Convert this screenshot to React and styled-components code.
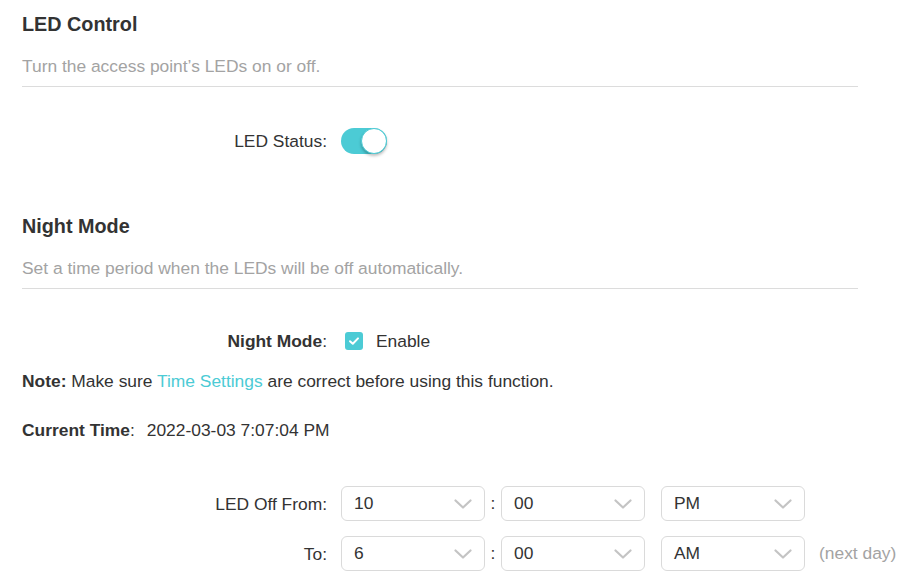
import React from "react";
import styled, { createGlobalStyle } from "styled-components";

const Global = createGlobalStyle`
  html, body { margin: 0; padding: 0; background: #fff; }
  body { font-family: "Liberation Sans", Arial, sans-serif; color: #333; }
`;

const Page = styled.div`
  width: 836px;
  padding: 12px 51px 0 22px;
  font-size: 17.4px;
`;

const SectionHead = styled.div`
  border-bottom: 1px solid #dcdcdc;
  padding-bottom: 8px;
  margin-top: ${(p) => p.$top || 0}px;
`;

const Title = styled.h2`
  margin: 0;
  font-size: 19.8px;
  line-height: 24px;
  font-weight: bold;
  color: #333;
`;

const Desc = styled.p`
  margin: 18px 0 0;
  line-height: 24px;
  color: #a3a3a3;
`;

const FormRow = styled.div`
  display: grid;
  grid-template-columns: 305px max-content;
  column-gap: 14px;
  align-items: center;
  margin-top: ${(p) => p.$top || 0}px;
  min-height: ${(p) => p.$h || 24}px;
`;

const Label = styled.div`
  text-align: right;
  line-height: 24px;
  b { font-weight: bold; }
`;

const Field = styled.div`
  display: flex;
  align-items: center;
  white-space: nowrap;
`;

const Toggle = styled.div`
  position: relative;
  width: 46px;
  height: 26px;
  border-radius: 13px;
  background: #4ccbd5;
`;

const Knob = styled.div`
  position: absolute;
  right: 0;
  top: 0;
  width: 24px;
  height: 24px;
  border-radius: 50%;
  background: #fff;
  border: 1px solid #4ccbd5;
  box-shadow: 0 2px 3px rgba(0, 0, 0, 0.25);
`;

const Check = styled.span`
  display: inline-flex;
  align-items: center;
  justify-content: center;
  width: 18px;
  height: 18px;
  border-radius: 3px;
  background: #4ccbd5;
  margin-left: 4px;
  margin-right: 13px;
`;

const Line = styled.div`
  line-height: 24px;
  margin-top: ${(p) => p.$top || 0}px;
  b { font-weight: bold; }
`;

const Link = styled.span`
  color: #4ccbd5;
`;

const Value = styled.span`
  margin-left: 12px;
`;

const Select = styled.div`
  box-sizing: border-box;
  flex: 0 0 144px;
  width: 144px;
  height: 35px;
  border: 1px solid #dadada;
  border-radius: 6px;
  padding: 0 12px 0 12px;
  display: flex;
  align-items: center;
  justify-content: space-between;
  color: #333;
`;

const Colon = styled.span`
  flex: 0 0 16px;
  text-align: center;
`;

const Gap = styled.span`
  flex: 0 0 16px;
`;

const Hint = styled.span`
  color: #a3a3a3;
  margin-left: 14px;
  white-space: nowrap;
`;

const Chevron = () => (
  <svg width="18" height="10" viewBox="0 0 18 10">
    <path d="M1.5 1.5 L9 8.5 L16.5 1.5" fill="none" stroke="#c4c4c4" strokeWidth="2.2" strokeLinecap="round" strokeLinejoin="round" />
  </svg>
);

const Sel = ({ value }) => (
  <Select>
    <span>{value}</span>
    <Chevron />
  </Select>
);

export default function App() {
  return (
    <>
      <Global />
      <Page>
        <SectionHead>
          <Title>LED Control</Title>
          <Desc>Turn the access point’s LEDs on or off.</Desc>
        </SectionHead>
        <FormRow $top={40} $h={27}>
          <Label>LED Status:</Label>
          <Field>
            <Toggle>
              <Knob />
            </Toggle>
          </Field>
        </FormRow>

        <SectionHead $top={60}>
          <Title>Night Mode</Title>
          <Desc>Set a time period when the LEDs will be off automatically.</Desc>
        </SectionHead>
        <FormRow $top={40}>
          <Label>
            <b>Night Mode</b>:
          </Label>
          <Field>
            <Check>
              <svg width="12" height="10" viewBox="0 0 12 10">
                <path d="M2 5.2 L4.8 7.8 L10 2.4" fill="none" stroke="#fff" strokeWidth="2" strokeLinecap="round" strokeLinejoin="round" />
              </svg>
            </Check>
            <span>Enable</span>
          </Field>
        </FormRow>
        <Line $top={16}>
          <b>Note:</b> Make sure <Link>Time Settings</Link> are correct before using this function.
        </Line>
        <Line $top={25}>
          <b>Current Time</b>:<Value>2022-03-03 7:07:04 PM</Value>
        </Line>
        <FormRow $top={44}>
          <Label>LED Off From:</Label>
          <Field>
            <Sel value="10" />
            <Colon>:</Colon>
            <Sel value="00" />
            <Gap />
            <Sel value="PM" />
          </Field>
        </FormRow>
        <FormRow $top={15}>
          <Label>To:</Label>
          <Field>
            <Sel value="6" />
            <Colon>:</Colon>
            <Sel value="00" />
            <Gap />
            <Sel value="AM" />
            <Hint>(next day)</Hint>
          </Field>
        </FormRow>
      </Page>
    </>
  );
}
